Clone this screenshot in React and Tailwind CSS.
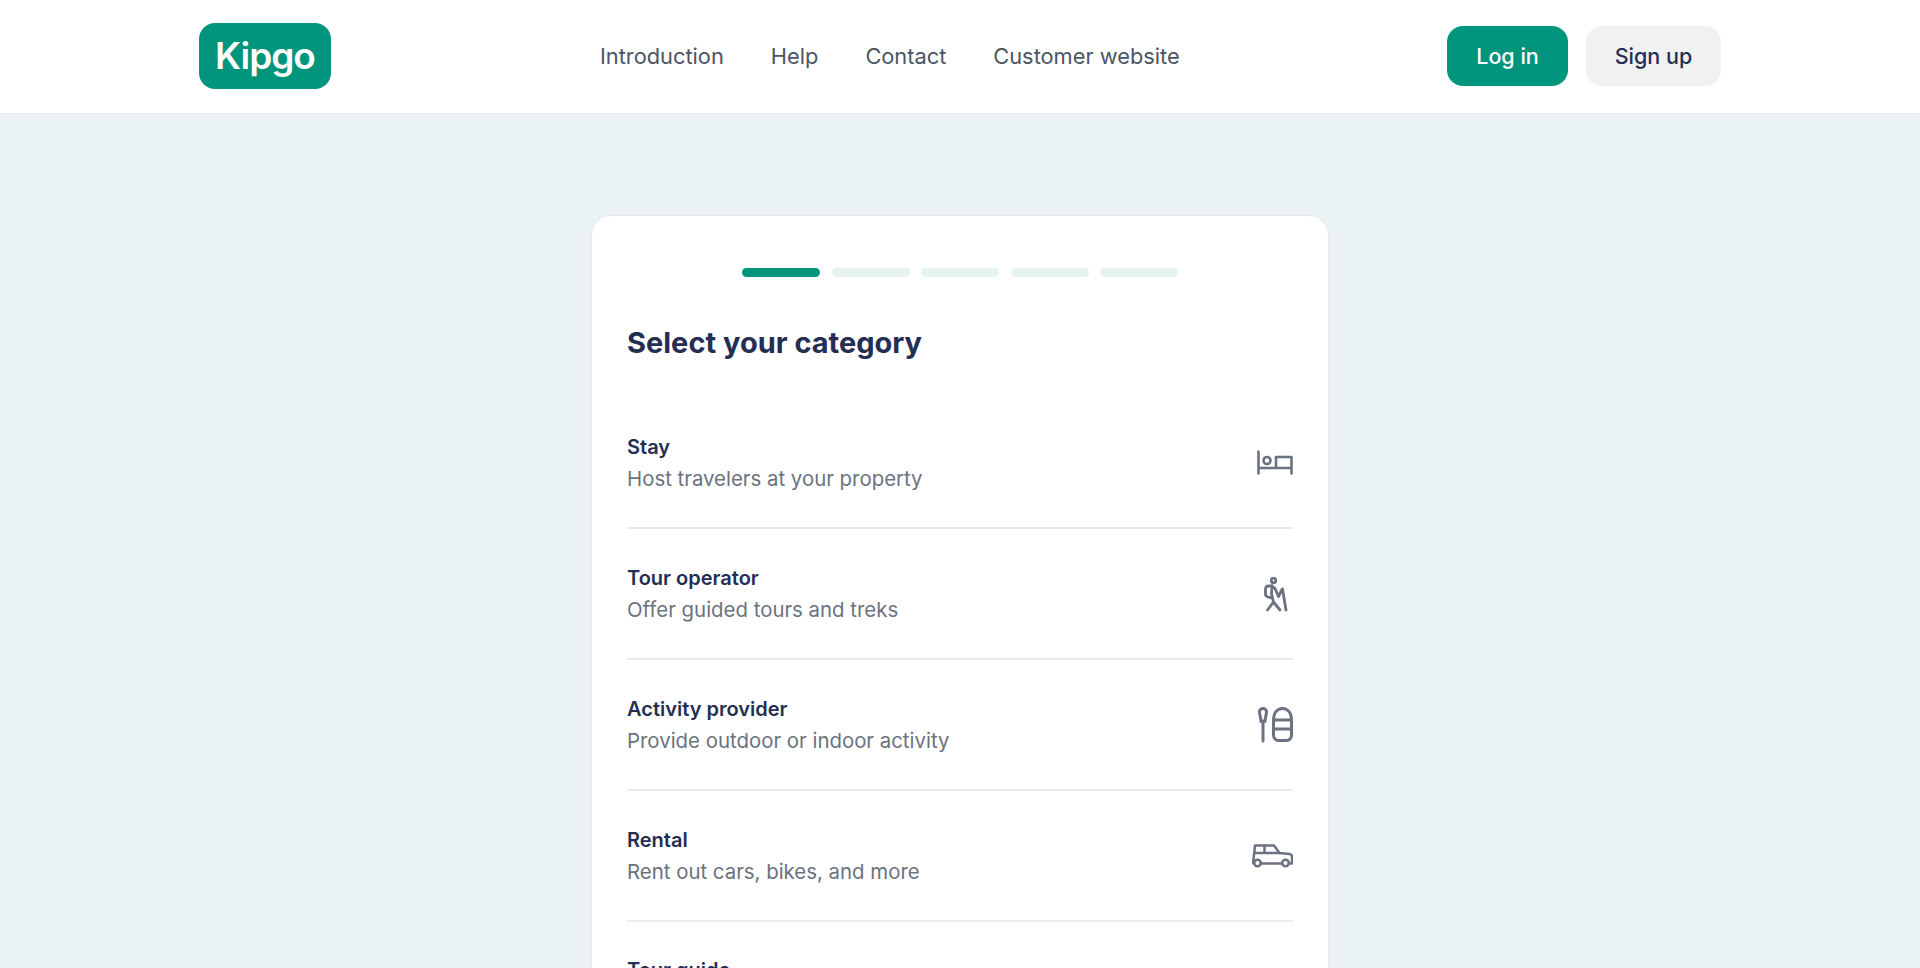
const navLinks = ['Introduction', 'Help', 'Contact', 'Customer website']

function BedIcon() {
  return (
    <svg width="36" height="25" viewBox="0 0 36 25" fill="none" stroke="#6b7280" strokeWidth="2.600" strokeLinecap="round" strokeLinejoin="round">
      <path d="M1.500 1.500v22M1.500 18h33M34.500 23.500V7H19v11" />
      <circle cx="10" cy="10.500" r="3.500" />
    </svg>
  )
}

function HikerIcon() {
  return (
    <svg className="mr-[5px] mt-[2px]" width="24" height="35" viewBox="0 0 24 35" fill="none" stroke="#6b7280" strokeWidth="2.800" strokeLinecap="round" strokeLinejoin="round">
      <circle cx="9.500" cy="3.500" r="2.300" />
      <path d="M8 9H4.500C2.500 9 1.500 10 1.500 12v5c0 1.500 1 2.500 2.500 3l3.500 1" />
      <path d="M8 9 7.500 16.500 9.500 25 3.500 33M9.500 25l6.500 8M8 9l3 2.500 3.500 8 3.500-7M18.500 12l3.500 21" />
    </svg>
  )
}

function BoatIcon() {
  return (
    <svg width="35" height="36" viewBox="0 0 35 36" fill="none" stroke="#6b7280" strokeWidth="3" strokeLinecap="round" strokeLinejoin="round">
      <path d="M5 34V14" />
      <path d="M1.500 4.500a3.500 3 0 0 1 7 0c0 4-1.500 6-1.500 10H3C3 10.500 1.500 8.500 1.500 4.500Z" />
      <path d="M15.500 14C15.500 6 19 1.500 24.500 1.500S33.500 6 33.500 14v14c0 3.500-2.500 5.500-5.500 5.500H21c-3 0-5.500-2-5.500-5.500ZM15.500 13h18M15.500 22h18" />
    </svg>
  )
}

function CarIcon() {
  return (
    <svg width="41" height="24" viewBox="0 0 41 24" fill="none" stroke="#6b7280" strokeWidth="2.500" strokeLinecap="round" strokeLinejoin="round">
      <path d="M2 19.500c-.800 0-1-.500-.800-1.500L3 1.500h19l5.500 7.500 10 1c1.500.2 2.500 1.200 2.500 2.500V19.500h-2.500M9 19.500h20.500" />
      <path d="M3 9h24.500M12.500 1.500V9" />
      <circle cx="5.500" cy="19" r="3.300" />
      <circle cx="33.500" cy="19" r="3.300" />
    </svg>
  )
}

const categories = [
  { title: 'Stay', desc: 'Host travelers at your property', Icon: BedIcon },
  { title: 'Tour operator', desc: 'Offer guided tours and treks', Icon: HikerIcon },
  { title: 'Activity provider', desc: 'Provide outdoor or indoor activity', Icon: BoatIcon },
  { title: 'Rental', desc: 'Rent out cars, bikes, and more', Icon: CarIcon },
]

export default function App() {
  return (
    <div className="h-screen overflow-hidden bg-[#eaf2f4] font-['Inter','Liberation_Sans',sans-serif]">
      <header className="h-[114px] bg-white border-b border-[#e3e9ec]">
        <div className="w-[1522px] h-full mx-auto pb-[2px] flex items-center">
          {/* Logo */}
          <div className="w-[132px] h-[66px] rounded-[16px] bg-[#02957d] flex items-center justify-center text-white text-[37px] font-semibold tracking-[-1px]">
            Kipgo
          </div>

          <nav className="ml-[269px] mt-[2px] flex items-center gap-[47px] text-[21.800px] text-[#4b5563]">
            {navLinks.map(l => (
              <a key={l} href="#">{l}</a>
            ))}
          </nav>

          <div className="ml-auto flex items-center gap-[18px] text-[21.500px] font-medium">
            <button className="w-[121px] h-[60px] pt-[2px] rounded-[16px] bg-[#02957d] text-white">Log in</button>
            <button className="w-[135px] h-[60px] pt-[2px] rounded-[16px] bg-[#f1f1f2] text-[#232e52]">Sign up</button>
          </div>
        </div>
      </header>

      <main className="pt-[101px]">
        <div className="w-[738px] mx-auto bg-white border border-[#e3e9ec] rounded-[20px] px-[35px] pt-[52px]">
          {/* Steps */}
          <div className="flex justify-center gap-[11.500px]">
            <div className="w-[78px] h-[9px] rounded-full bg-[#02957d]" />
            <div className="w-[78px] h-[9px] rounded-full bg-[#e6f3f2]" />
            <div className="w-[78px] h-[9px] rounded-full bg-[#e6f3f2]" />
            <div className="w-[78px] h-[9px] rounded-full bg-[#e6f3f2]" />
            <div className="w-[78px] h-[9px] rounded-full bg-[#e6f3f2]" />
          </div>

          <h1 className="mt-[46px] mb-[35px] text-[29px] leading-[40px] font-bold text-[#232e52]">Select your category</h1>

          {categories.map(({ title, desc, Icon }) => (
            <div key={title} className="h-[131px] border-b-2 border-[#e9ebec] flex items-center justify-between">
              <div>
                <div className="text-[20px] leading-[30px] font-semibold text-[#232e52]">{title}</div>
                <div className="mt-[2px] text-[20.400px] leading-[30px] text-[#6b7280]">{desc}</div>
              </div>
              <div className="flex"><Icon /></div>
            </div>
          ))}

          <div className="pt-[33px] text-[20px] leading-[30px] font-semibold text-[#232e52]">Tour guide</div>
        </div>
      </main>
    </div>
  )
}
